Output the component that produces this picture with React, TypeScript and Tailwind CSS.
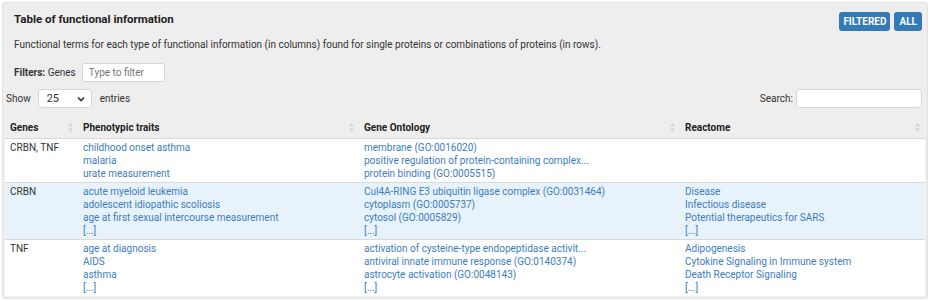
const rows = [
  {
    genes: "CRBN, TNF",
    traits: ["childhood onset asthma", "malaria", "urate measurement"],
    go: [
      "membrane (GO:0016020)",
      "positive regulation of protein-containing complex...",
      "protein binding (GO:0005515)",
    ],
    reactome: [] as string[],
    more: false,
    bg: "bg-white",
  },
  {
    genes: "CRBN",
    traits: [
      "acute myeloid leukemia",
      "adolescent idiopathic scoliosis",
      "age at first sexual intercourse measurement",
    ],
    go: [
      "Cul4A-RING E3 ubiquitin ligase complex (GO:0031464)",
      "cytoplasm (GO:0005737)",
      "cytosol (GO:0005829)",
    ],
    reactome: ["Disease", "Infectious disease", "Potential therapeutics for SARS"],
    more: true,
    bg: "bg-[#e8f2fa]",
  },
  {
    genes: "TNF",
    traits: ["age at diagnosis", "AIDS", "asthma"],
    go: [
      "activation of cysteine-type endopeptidase activit...",
      "antiviral innate immune response (GO:0140374)",
      "astrocyte activation (GO:0048143)",
    ],
    reactome: ["Adipogenesis", "Cytokine Signaling in Immune system", "Death Receptor Signaling"],
    more: true,
    bg: "bg-white",
  },
];

const SortIcon = () => (
  <svg width="7" height="11" viewBox="0 0 7 11" className="shrink-0">
    <path d="M3.5 1 L6 4.5 L1 4.5 Z" fill="#d4d4d4" />
    <path d="M3.5 10 L6 6.5 L1 6.5 Z" fill="#d4d4d4" />
  </svg>
);

const Links = ({ items, more }: { items: string[]; more: boolean }) => (
  <div className="flex flex-col">
    {items.map((t) => (
      <span key={t} className="text-[#3c7dbf] whitespace-nowrap">
        {t}
      </span>
    ))}
    {more && items.length > 0 && <span className="text-[#3c7dbf]">[...]</span>}
  </div>
);

export default function App() {
  const cols = "grid grid-cols-[73px_281px_321px_1fr]";

  return (
    <div className="w-[930px] h-[301px] bg-white pt-[2px] px-[2px] font-['Roboto','Liberation_Sans',sans-serif] text-[10px] leading-[13px] text-[#333]">
      <div className="rounded-[3px] border border-[#e2e2e2] bg-[#eeeeee] px-px pb-[2px]">
        {/* titre + boutons */}
        <div className="flex justify-between pl-[10px] pr-[4px] pt-[8px]">
          <h2 className="text-[11.5px] leading-[16px] font-bold text-[#222]">Table of functional information</h2>
          <div className="flex gap-[4px] pt-px">
            <button className="h-[19px] rounded-[3px] bg-[#337ab7] px-[4px] text-[10px] font-bold text-white">
              FILTERED
            </button>
            <button className="h-[19px] rounded-[3px] bg-[#337ab7] px-[5px] text-[10px] font-bold text-white">
              ALL
            </button>
          </div>
        </div>

        <p className="pl-[10px] pt-[7px]">
          Functional terms for each type of functional information (in columns) found for single proteins or
          combinations of proteins (in rows).
        </p>

        {/* filtres */}
        <div className="flex items-center pl-[10px] pt-[12px]">
          <span>
            <b className="font-bold">Filters:</b> Genes
          </span>
          <input
            placeholder="Type to filter"
            className="ml-[6px] h-[19px] w-[83px] rounded-[3px] border border-[#d6d6d6] bg-white px-[6px] text-[10px] placeholder:text-[#777] outline-none"
          />
        </div>

        <div className="flex items-center justify-between pl-[2px] pr-[4px] pt-[7px]">
          <div className="flex items-center">
            <span>Show</span>
            <div className="ml-[7px] flex h-[19px] w-[54px] items-center justify-between rounded-[3px] border border-[#d6d6d6] bg-white pl-[8px] pr-[6px]">
              <span className="text-[11px]">25</span>
              <svg width="8" height="6" viewBox="0 0 8 6">
                <path d="M1 1.5 L4 4.5 L7 1.5" stroke="#333" strokeWidth="1.6" fill="none" />
              </svg>
            </div>
            <span className="ml-[8px]">entries</span>
          </div>
          <div className="flex items-center">
            <span>Search:</span>
            <div className="ml-[3px] h-[19px] w-[126px] rounded-[3px] border border-[#d6d6d6] bg-white" />
          </div>
        </div>

        {/* tableau */}
        <div className="mt-[9px] mx-px">
          <div className={`${cols} h-[21px] items-center font-bold text-[#222]`}>
            {["Genes", "Phenotypic traits", "Gene Ontology", "Reactome"].map((h) => (
              <div key={h} className="flex items-center justify-between pl-[5px] pr-[4px]">
                <span>{h}</span>
                <SortIcon />
              </div>
            ))}
          </div>
          {rows.map((r) => (
            <div key={r.genes} className={`${cols} ${r.bg} border-t border-[#d9d9d9] pt-[2px] pb-[2px]`}>
              <div className="pl-[5px]">{r.genes}</div>
              <div className="pl-[5px]">
                <Links items={r.traits} more={r.more} />
              </div>
              <div className="pl-[5px]">
                <Links items={r.go} more={r.more} />
              </div>
              <div className="pl-[5px]">
                <Links items={r.reactome} more={r.more} />
              </div>
            </div>
          ))}
        </div>
      </div>
    </div>
  );
}
